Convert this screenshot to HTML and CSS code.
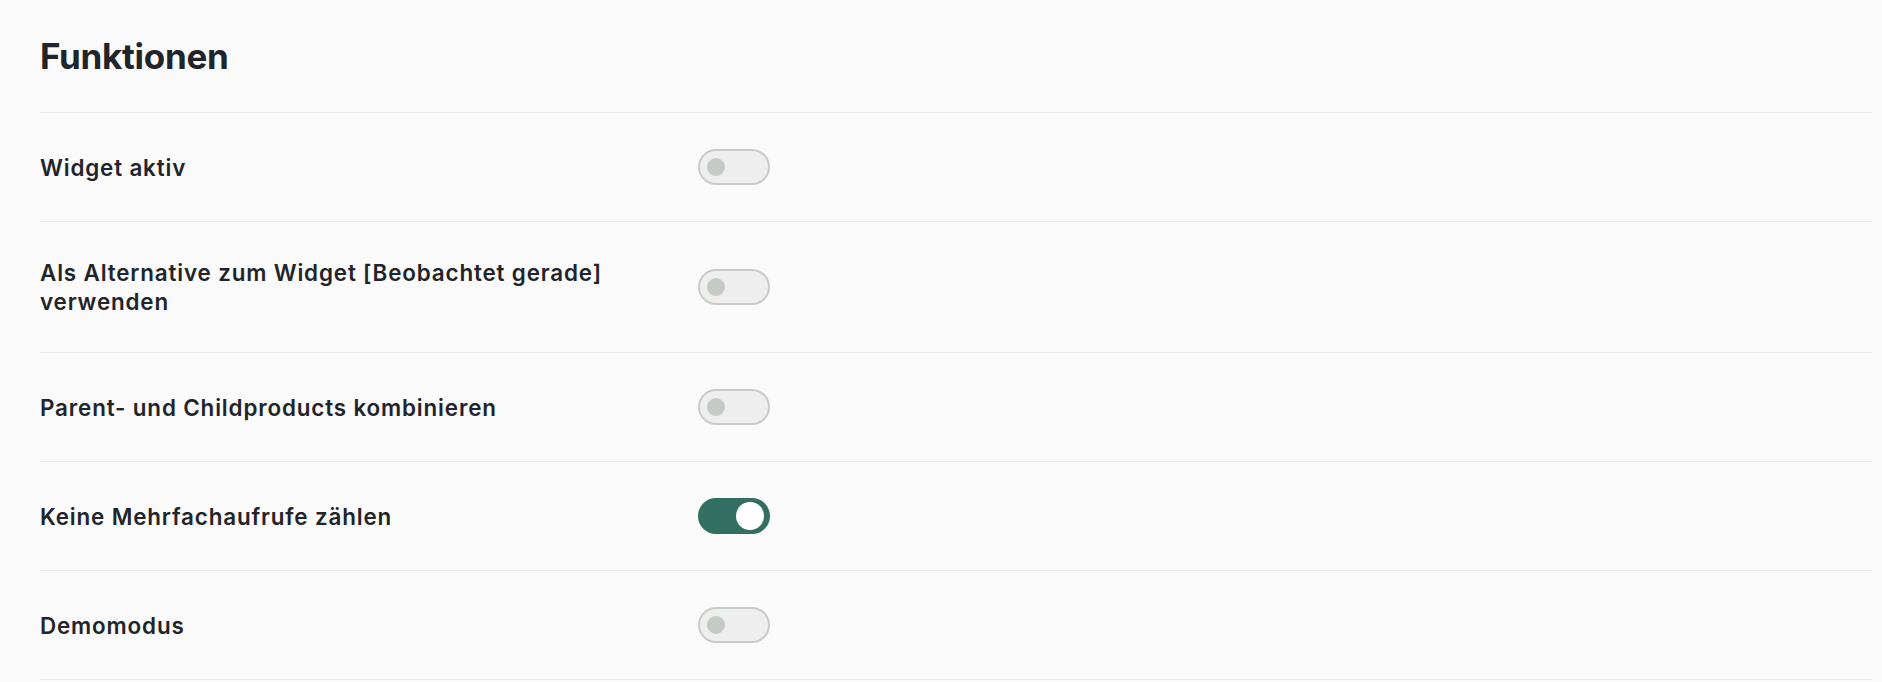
FILE: index.html
```html
<!DOCTYPE html>
<html lang="de">
<head>
<meta charset="utf-8">
<title>Funktionen</title>
<link rel="stylesheet" href="styles.css">
</head>
<body>
<main class="panel">
  <h2 class="title">Funktionen</h2>
  <ul class="settings">
    <li class="setting">
      <span class="label">Widget aktiv</span>
      <span class="switch" role="switch" aria-checked="false"><span class="knob"></span></span>
    </li>
    <li class="setting">
      <span class="label">Als Alternative zum Widget [Beobachtet gerade] verwenden</span>
      <span class="switch" role="switch" aria-checked="false"><span class="knob"></span></span>
    </li>
    <li class="setting">
      <span class="label">Parent- und Childproducts kombinieren</span>
      <span class="switch" role="switch" aria-checked="false"><span class="knob"></span></span>
    </li>
    <li class="setting">
      <span class="label">Keine Mehrfachaufrufe zählen</span>
      <span class="switch is-on" role="switch" aria-checked="true"><span class="knob"></span></span>
    </li>
    <li class="setting">
      <span class="label">Demomodus</span>
      <span class="switch" role="switch" aria-checked="false"><span class="knob"></span></span>
    </li>
  </ul>
</main>
</body>
</html>
```

FILE: styles.css
```css
* { box-sizing: border-box; }

html, body {
  margin: 0;
  padding: 0;
  background: #fafafa;
}

body {
  font-family: Inter, "Liberation Sans", sans-serif;
  color: #212429;
}

.panel {
  padding: 35px 10px 0 40px;
}

.title {
  margin: 0 0 35px 0;
  font-size: 35px;
  line-height: 42px;
  font-weight: 700;
  letter-spacing: -0.3px;
}

.settings {
  list-style: none;
  margin: 0;
  padding: 0;
  border-bottom: 1px solid #e9e9e9;
}

.setting {
  display: grid;
  grid-template-columns: 640px 72px;
  column-gap: 18px;
  align-items: center;
  padding: 36px 0;
  border-top: 1px solid #e9e9e9;
}

.label {
  font-size: 22.4px;
  line-height: 29px;
  font-weight: 600;
  letter-spacing: 0.85px;
}

.switch {
  display: flex;
  align-items: center;
  width: 72px;
  height: 36px;
  padding: 0 7px;
  border: 2px solid #c7ccc7;
  border-radius: 18px;
  background: #eeeeee;
}

.knob {
  width: 18px;
  height: 18px;
  border-radius: 50%;
  background: #c4cac4;
}

.switch.is-on {
  justify-content: flex-end;
  padding: 0 4px;
  border-color: #346f63;
  background: #346f63;
}

.switch.is-on .knob {
  width: 28px;
  height: 28px;
  background: #ffffff;
}
```
